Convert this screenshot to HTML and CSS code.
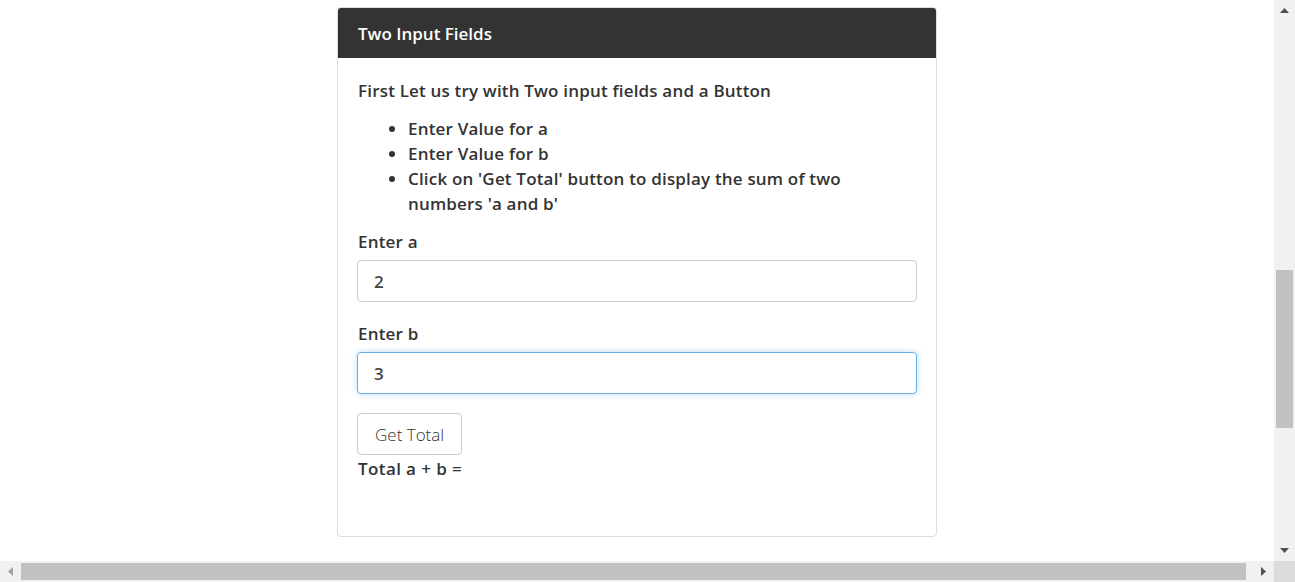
FILE: index.html
```html
<!DOCTYPE html>
<html lang="en">
<head>
<meta charset="utf-8">
<title>Two Input Fields</title>
<link rel="stylesheet" href="styles.css">
</head>
<body>
<div class="viewport">
  <div class="main">
    <div class="content">
      <div class="card">
        <div class="card-header">Two Input Fields</div>
        <div class="card-body">
          <p class="intro">First Let us try with Two input fields and a Button</p>
          <ul class="steps">
            <li>Enter Value for a</li>
            <li>Enter Value for b</li>
            <li>Click on 'Get Total' button to display the sum of two numbers 'a and b'</li>
          </ul>
          <div class="form-group">
            <label class="field-label" for="a">Enter a</label>
            <input class="field" id="a" type="text" value="2">
          </div>
          <div class="form-group">
            <label class="field-label" for="b">Enter b</label>
            <input class="field field-focus" id="b" type="text" value="3">
          </div>
          <button class="btn" type="button">Get Total</button>
          <div class="total">Total a + b =</div>
        </div>
      </div>
    </div>
    <div class="vscroll">
      <div class="sb-btn"><svg width="9" height="5" viewBox="0 0 9 5"><path d="M0 5 L4.5 0 L9 5 Z" fill="#505050"/></svg></div>
      <div class="vtrack"><div class="vthumb"></div></div>
      <div class="sb-btn"><svg width="9" height="5" viewBox="0 0 9 5"><path d="M0 0 L4.5 5 L9 0 Z" fill="#505050"/></svg></div>
    </div>
  </div>
  <div class="hscroll">
    <div class="sb-btn"><svg width="5" height="9" viewBox="0 0 5 9"><path d="M5 0 L0 4.5 L5 9 Z" fill="#a3a3a3"/></svg></div>
    <div class="htrack"><div class="hthumb"></div></div>
    <div class="sb-btn"><svg width="5" height="9" viewBox="0 0 5 9"><path d="M0 0 L5 4.5 L0 9 Z" fill="#505050"/></svg></div>
    <div class="corner"></div>
  </div>
</div>
</body>
</html>
```
FILE: styles.css
```css
html, body {
  margin: 0;
  padding: 0;
  background: #fff;
}
body {
  font-family: "Open Sans", "Noto Sans", sans-serif;
  color: #333;
  overflow: hidden;
}
.viewport {
  display: flex;
  flex-direction: column;
  width: 1295px;
  height: 582px;
}
.main {
  flex: 1;
  display: flex;
  min-height: 0;
}
.content {
  flex: 1;
  padding-top: 7px;
  display: flex;
  justify-content: center;
  align-items: flex-start;
}
.card {
  width: 598px;
  border: 1px solid #dcdcdc;
  border-radius: 4px;
  overflow: hidden;
}
.card-header {
  background: #333;
  color: #fff;
  height: 50px;
  display: flex;
  align-items: center;
  padding: 0 20px;
  font-size: 17px;
  font-weight: 600;
}
.card-body {
  padding: 20px 19px 55px;
  font-size: 17px;
  font-weight: 600;
  line-height: 25px;
  letter-spacing: 0.18px;
}
.intro {
  margin: 0 0 13px 1px;
}
.steps {
  margin: 0 0 13px;
  padding-left: 51px;
}
.form-group {
  margin-bottom: 19px;
}
.field-label {
  display: block;
  margin: 0 0 6px 1px;
}
.field {
  display: block;
  box-sizing: border-box;
  width: 100%;
  height: 42px;
  padding: 0 16px;
  border: 1px solid #ccc;
  border-radius: 4px;
  font: inherit;
  color: #444;
  outline: none;
}
.field-focus {
  border-color: #66afe9;
  box-shadow: 0 0 6px rgba(102, 175, 233, 0.45);
}
.btn {
  display: block;
  height: 42px;
  padding: 0 17px;
  background: #fff;
  border: 1px solid #ccc;
  border-radius: 4px;
  font-family: inherit;
  font-size: 17px;
  font-weight: 300;
  color: #333;
}
.total {
  margin: 1px 0 0 1px;
  letter-spacing: 0.4px;
}
.vscroll {
  width: 21px;
  background: #f1f1f1;
  display: flex;
  flex-direction: column;
}
.sb-btn {
  width: 21px;
  height: 21px;
  display: flex;
  align-items: center;
  justify-content: center;
  flex: none;
}
.vtrack {
  flex: 1;
  padding: 249px 2px 0;
}
.vthumb {
  height: 158px;
  background: #c1c1c1;
}
.hscroll {
  height: 21px;
  background: #f1f1f1;
  display: flex;
}
.htrack {
  flex: 1;
  padding: 2px 7px 2px 0;
}
.hthumb {
  height: 17px;
  background: #c1c1c1;
}
.corner {
  width: 21px;
  background: #dcdcdc;
}
```
